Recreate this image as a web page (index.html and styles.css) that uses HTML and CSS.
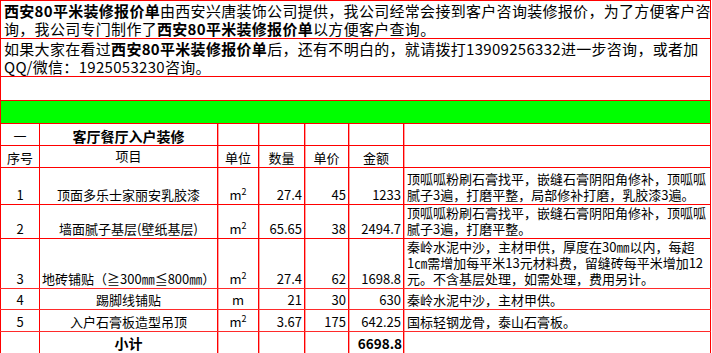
FILE: index.html
```html
<!DOCTYPE html>
<html lang="zh-CN">
<head>
<meta charset="utf-8">
<title>西安80平米装修报价单</title>
<link rel="stylesheet" href="styles.css">
</head>
<body>
<table class="sheet">
  <colgroup>
    <col class="c-no">
    <col class="c-item">
    <col class="c-unit">
    <col class="c-qty">
    <col class="c-price">
    <col class="c-amount">
    <col class="c-note">
  </colgroup>
  <tbody>
    <tr class="r-intro">
      <td colspan="7" class="intro"><b>西安80平米装修报价单</b>由西安兴唐装饰公司提供，我公司经常会接到客户咨询装修报价，为了方便客户咨<br>询，我公司专门制作了<b>西安80平米装修报价单</b>以方便客户查询。</td>
    </tr>
    <tr class="r-intro">
      <td colspan="7" class="intro">如果大家在看过<b>西安80平米装修报价单</b>后，还有不明白的，就请拨打13909256332进一步咨询，或者加<br>QQ/微信：1925053230咨询。</td>
    </tr>
    <tr class="r-blank"><td colspan="7"></td></tr>
    <tr class="r-green"><td colspan="7" class="green"></td></tr>
    <tr class="r-22">
      <td class="center">一</td>
      <td class="center bold section">客厅餐厅入户装修</td>
      <td class="mid"></td><td class="mid"></td><td class="mid"></td><td class="mid"></td><td class="mid"></td>
    </tr>
    <tr class="r-22 head">
      <td class="center">序号</td>
      <td class="center top">项目</td>
      <td class="center mid">单位</td>
      <td class="center mid">数量</td>
      <td class="center mid">单价</td>
      <td class="center mid">金额</td>
      <td class="mid"></td>
    </tr>
    <tr class="r-1">
      <td class="center">1</td>
      <td class="center">顶面多乐士家丽安乳胶漆</td>
      <td class="center mid">m<sup>2</sup></td>
      <td class="num mid">27.4</td>
      <td class="num mid">45</td>
      <td class="num mid">1233</td>
      <td class="note mid">顶呱呱粉刷石膏找平，嵌缝石膏阴阳角修补，顶呱呱<br>腻子3遍，打磨平整，局部修补打磨，乳胶漆3遍。</td>
    </tr>
    <tr class="r-2">
      <td class="center">2</td>
      <td class="center">墙面腻子基层(壁纸基层)</td>
      <td class="center mid">m<sup>2</sup></td>
      <td class="num mid">65.65</td>
      <td class="num mid">38</td>
      <td class="num mid">2494.7</td>
      <td class="note mid">顶呱呱粉刷石膏找平，嵌缝石膏阴阳角修补，顶呱呱<br>腻子3遍，打磨平整。</td>
    </tr>
    <tr class="r-3 soft">
      <td class="center">3</td>
      <td class="center">地砖铺贴（≧300㎜≦800㎜）</td>
      <td class="center mid">m<sup>2</sup></td>
      <td class="num mid">27.4</td>
      <td class="num mid">62</td>
      <td class="num mid">1698.8</td>
      <td class="note mid">秦岭水泥中沙，主材甲供，厚度在30㎜以内，每超<br>1㎝需增加每平米13元材料费，留缝砖每平米增加12<br>元。不含基层处理，如需处理，费用另计。</td>
    </tr>
    <tr class="r-4 soft">
      <td class="center">4</td>
      <td class="center">踢脚线铺贴</td>
      <td class="center mid">m</td>
      <td class="num mid">21</td>
      <td class="num mid">30</td>
      <td class="num mid">630</td>
      <td class="note mid">秦岭水泥中沙，主材甲供。</td>
    </tr>
    <tr class="r-5 soft">
      <td class="center">5</td>
      <td class="center">入户石膏板造型吊顶</td>
      <td class="center mid">m<sup>2</sup></td>
      <td class="num mid">3.67</td>
      <td class="num mid">175</td>
      <td class="num mid">642.25</td>
      <td class="note mid">国标轻钢龙骨，泰山石膏板。</td>
    </tr>
    <tr class="r-total">
      <td></td>
      <td class="center bold section">小计</td>
      <td class="mid"></td>
      <td class="mid"></td>
      <td class="mid"></td>
      <td class="num bold mid total">6698.8</td>
      <td class="mid"></td>
    </tr>
  </tbody>
</table>
</body>
</html>
```

FILE: styles.css
```css
html, body {
  margin: 0;
  padding: 0;
  background: #ffffff;
}

body {
  font-family: "Noto Sans CJK SC", "Noto Sans", sans-serif;
  color: #000000;
}

.sheet {
  border-collapse: collapse;
  table-layout: fixed;
  width: 710px;
  font-size: 13px;
  line-height: 16px;
}

.c-no { width: 39px; }
.c-item { width: 178px; }
.c-unit { width: 41px; }
.c-qty { width: 46px; }
.c-price { width: 44px; }
.c-amount { width: 55px; }
.c-note { width: 307px; }

.sheet td {
  border: 1px solid #ff0000;
  padding: 0 2px 1px 2px;
  vertical-align: bottom;
  white-space: nowrap;
  overflow: hidden;
}

.sheet td.mid {
  box-shadow: inset 1px 0 0 #ffa0a0;
}

.soft td {
  border-bottom-color: #ff2a2a;
}

.sheet td.intro {
  font-size: 15px;
  letter-spacing: 0.3px;
  line-height: 18px;
  vertical-align: top;
  padding: 1px 2px 0 3px;
}

.intro b {
  font-weight: 700;
}

.r-intro { height: 38px; }
.r-blank { height: 24px; }
.r-green { height: 23px; }
.r-22 { height: 22px; }
.r-1 { height: 37px; }
.r-2 { height: 33px; }
.r-3 { height: 49px; }
.r-4 { height: 21px; }
.r-5 { height: 22px; }
.r-total { height: 23px; }

.r-total td {
  padding-bottom: 3px;
}

.sheet td.green {
  background: #00ff00;
}

.center { text-align: center; }
.num { text-align: right; }
.bold { font-weight: 700; }
.section { font-size: 14px; }
.sheet td.total { font-size: 13.5px; padding-left: 1px; padding-right: 1px; }

.sheet td.top {
  vertical-align: top;
  padding-top: 2px;
}

.sheet td.note {
  text-align: left;
  padding-left: 3px;
}

sup {
  font-size: 9px;
  line-height: 0;
  vertical-align: 5px;
}
```
